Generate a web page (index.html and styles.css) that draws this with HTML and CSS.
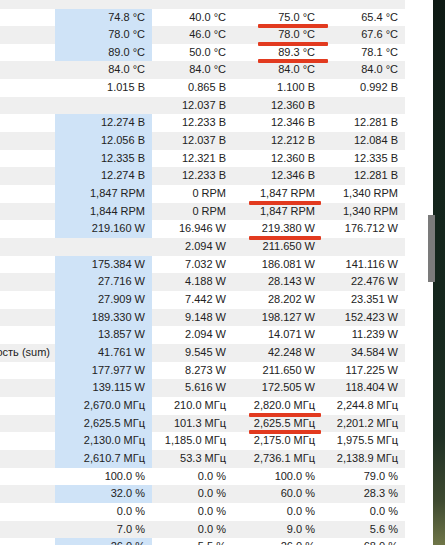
FILE: index.html
```html
<!DOCTYPE html>
<html lang="ru">
<head>
<meta charset="utf-8">
<title>Sensors</title>
<link rel="stylesheet" href="styles.css">
</head>
<body>
<div class="screen">
  <div class="table">
    <div class="row top alt"><div class="lbl"></div><div class="c"></div><div class="c"></div><div class="c"></div><div class="c"></div></div>
    <div class="row"><div class="lbl"></div><div class="c hl">74.8 °C</div><div class="c">40.0 °C</div><div class="c mark">75.0 °C</div><div class="c">65.4 °C</div></div>
    <div class="row alt"><div class="lbl"></div><div class="c hl">78.0 °C</div><div class="c">46.0 °C</div><div class="c mark">78.0 °C</div><div class="c">67.6 °C</div></div>
    <div class="row"><div class="lbl"></div><div class="c hl">89.0 °C</div><div class="c">50.0 °C</div><div class="c mark">89.3 °C</div><div class="c">78.1 °C</div></div>
    <div class="row alt"><div class="lbl"></div><div class="c">84.0 °C</div><div class="c">84.0 °C</div><div class="c">84.0 °C</div><div class="c">84.0 °C</div></div>
    <div class="row"><div class="lbl"></div><div class="c">1.015 В</div><div class="c">0.865 В</div><div class="c">1.100 В</div><div class="c">0.992 В</div></div>
    <div class="row alt"><div class="lbl"></div><div class="c"></div><div class="c">12.037 В</div><div class="c">12.360 В</div><div class="c"></div></div>
    <div class="row"><div class="lbl"></div><div class="c hl">12.274 В</div><div class="c">12.233 В</div><div class="c">12.346 В</div><div class="c">12.281 В</div></div>
    <div class="row alt"><div class="lbl"></div><div class="c hl">12.056 В</div><div class="c">12.037 В</div><div class="c">12.212 В</div><div class="c">12.084 В</div></div>
    <div class="row"><div class="lbl"></div><div class="c hl">12.335 В</div><div class="c">12.321 В</div><div class="c">12.360 В</div><div class="c">12.335 В</div></div>
    <div class="row alt"><div class="lbl"></div><div class="c hl">12.274 В</div><div class="c">12.233 В</div><div class="c">12.346 В</div><div class="c">12.281 В</div></div>
    <div class="row"><div class="lbl"></div><div class="c hl">1,847 RPM</div><div class="c">0 RPM</div><div class="c mark wide">1,847 RPM</div><div class="c">1,340 RPM</div></div>
    <div class="row alt"><div class="lbl"></div><div class="c hl">1,844 RPM</div><div class="c">0 RPM</div><div class="c">1,847 RPM</div><div class="c">1,340 RPM</div></div>
    <div class="row"><div class="lbl"></div><div class="c hl">219.160 W</div><div class="c">16.946 W</div><div class="c mark wide">219.380 W</div><div class="c">176.712 W</div></div>
    <div class="row alt"><div class="lbl"></div><div class="c"></div><div class="c">2.094 W</div><div class="c">211.650 W</div><div class="c"></div></div>
    <div class="row"><div class="lbl"></div><div class="c hl">175.384 W</div><div class="c">7.032 W</div><div class="c">186.081 W</div><div class="c">141.116 W</div></div>
    <div class="row alt"><div class="lbl"></div><div class="c hl">27.716 W</div><div class="c">4.188 W</div><div class="c">28.143 W</div><div class="c">22.476 W</div></div>
    <div class="row"><div class="lbl"></div><div class="c hl">27.909 W</div><div class="c">7.442 W</div><div class="c">28.202 W</div><div class="c">23.351 W</div></div>
    <div class="row alt"><div class="lbl"></div><div class="c hl">189.330 W</div><div class="c">9.148 W</div><div class="c">198.127 W</div><div class="c">152.423 W</div></div>
    <div class="row"><div class="lbl"></div><div class="c hl">13.857 W</div><div class="c">2.094 W</div><div class="c">14.071 W</div><div class="c">11.239 W</div></div>
    <div class="row alt"><div class="lbl"><span>Мощность (sum)</span></div><div class="c hl">41.761 W</div><div class="c">9.545 W</div><div class="c">42.248 W</div><div class="c">34.584 W</div></div>
    <div class="row"><div class="lbl"></div><div class="c hl">177.977 W</div><div class="c">8.273 W</div><div class="c">211.650 W</div><div class="c">117.225 W</div></div>
    <div class="row alt"><div class="lbl"></div><div class="c hl">139.115 W</div><div class="c">5.616 W</div><div class="c">172.505 W</div><div class="c">118.404 W</div></div>
    <div class="row"><div class="lbl"></div><div class="c hl">2,670.0 МГц</div><div class="c">210.0 МГц</div><div class="c mark wide">2,820.0 МГц</div><div class="c">2,244.8 МГц</div></div>
    <div class="row alt"><div class="lbl"></div><div class="c hl">2,625.5 МГц</div><div class="c">101.3 МГц</div><div class="c mark wide">2,625.5 МГц</div><div class="c">2,201.2 МГц</div></div>
    <div class="row"><div class="lbl"></div><div class="c hl">2,130.0 МГц</div><div class="c">1,185.0 МГц</div><div class="c">2,175.0 МГц</div><div class="c">1,975.5 МГц</div></div>
    <div class="row alt"><div class="lbl"></div><div class="c hl">2,610.7 МГц</div><div class="c">53.3 МГц</div><div class="c">2,736.1 МГц</div><div class="c">2,138.9 МГц</div></div>
    <div class="row"><div class="lbl"></div><div class="c">100.0 %</div><div class="c">0.0 %</div><div class="c">100.0 %</div><div class="c">79.0 %</div></div>
    <div class="row alt"><div class="lbl"></div><div class="c hl">32.0 %</div><div class="c">0.0 %</div><div class="c">60.0 %</div><div class="c">28.3 %</div></div>
    <div class="row"><div class="lbl"></div><div class="c">0.0 %</div><div class="c">0.0 %</div><div class="c">0.0 %</div><div class="c">0.0 %</div></div>
    <div class="row alt"><div class="lbl"></div><div class="c">7.0 %</div><div class="c">0.0 %</div><div class="c">9.0 %</div><div class="c">5.6 %</div></div>
    <div class="row"><div class="lbl"></div><div class="c hl">26.0 %</div><div class="c">5.5 %</div><div class="c">26.0 %</div><div class="c">68.0 %</div></div>
  </div>
  <div class="edge">
    <div class="pad"></div>
    <div class="desktop"></div>
    <div class="thumb"></div>
  </div>
</div>
</body>
</html>
```

FILE: styles.css
```css
html, body {
  margin: 0;
  padding: 0;
  background: #ffffff;
}

.screen {
  width: 445px;
  height: 545px;
  overflow: hidden;
  display: flex;
  font-family: "Liberation Sans", Arial, sans-serif;
  font-size: 11px;
  color: #222222;
}

.table {
  width: 405px;
  flex: none;
  background: #ffffff;
}

.row {
  display: grid;
  grid-template-columns: 55px 97px 81px 89px 83px;
  height: 17.66px;
  line-height: 17.66px;
  white-space: nowrap;
}

.row.top {
  height: 8.5px;
}

.row.alt {
  background: #efefef;
}

.c {
  text-align: right;
  padding-right: 7px;
  position: relative;
}

.c.hl {
  background: #cfe3f7;
}

.lbl {
  display: flex;
  justify-content: flex-end;
  overflow: hidden;
  padding-right: 5px;
}

.lbl span {
  flex: none;
}

.mark::after {
  content: "";
  position: absolute;
  left: 25px;
  width: 70px;
  bottom: -2px;
  height: 4px;
  background: #e23a1f;
  border-radius: 1px;
  z-index: 2;
}

.mark.wide::after {
  left: 16px;
  width: 72px;
}

.edge {
  flex: 1;
  display: flex;
  position: relative;
}

.pad {
  width: 28px;
  background: #ffffff;
}

.desktop {
  flex: 1;
  background: linear-gradient(180deg, #0e1a14 0%, #13241b 35%, #16281e 60%, #1f3024 80%, #3e4a30 92%, #6f7648 100%);
}

.thumb {
  position: absolute;
  left: 23px;
  top: 215px;
  width: 7px;
  height: 67px;
  background: #7b7b7b;
}
```
